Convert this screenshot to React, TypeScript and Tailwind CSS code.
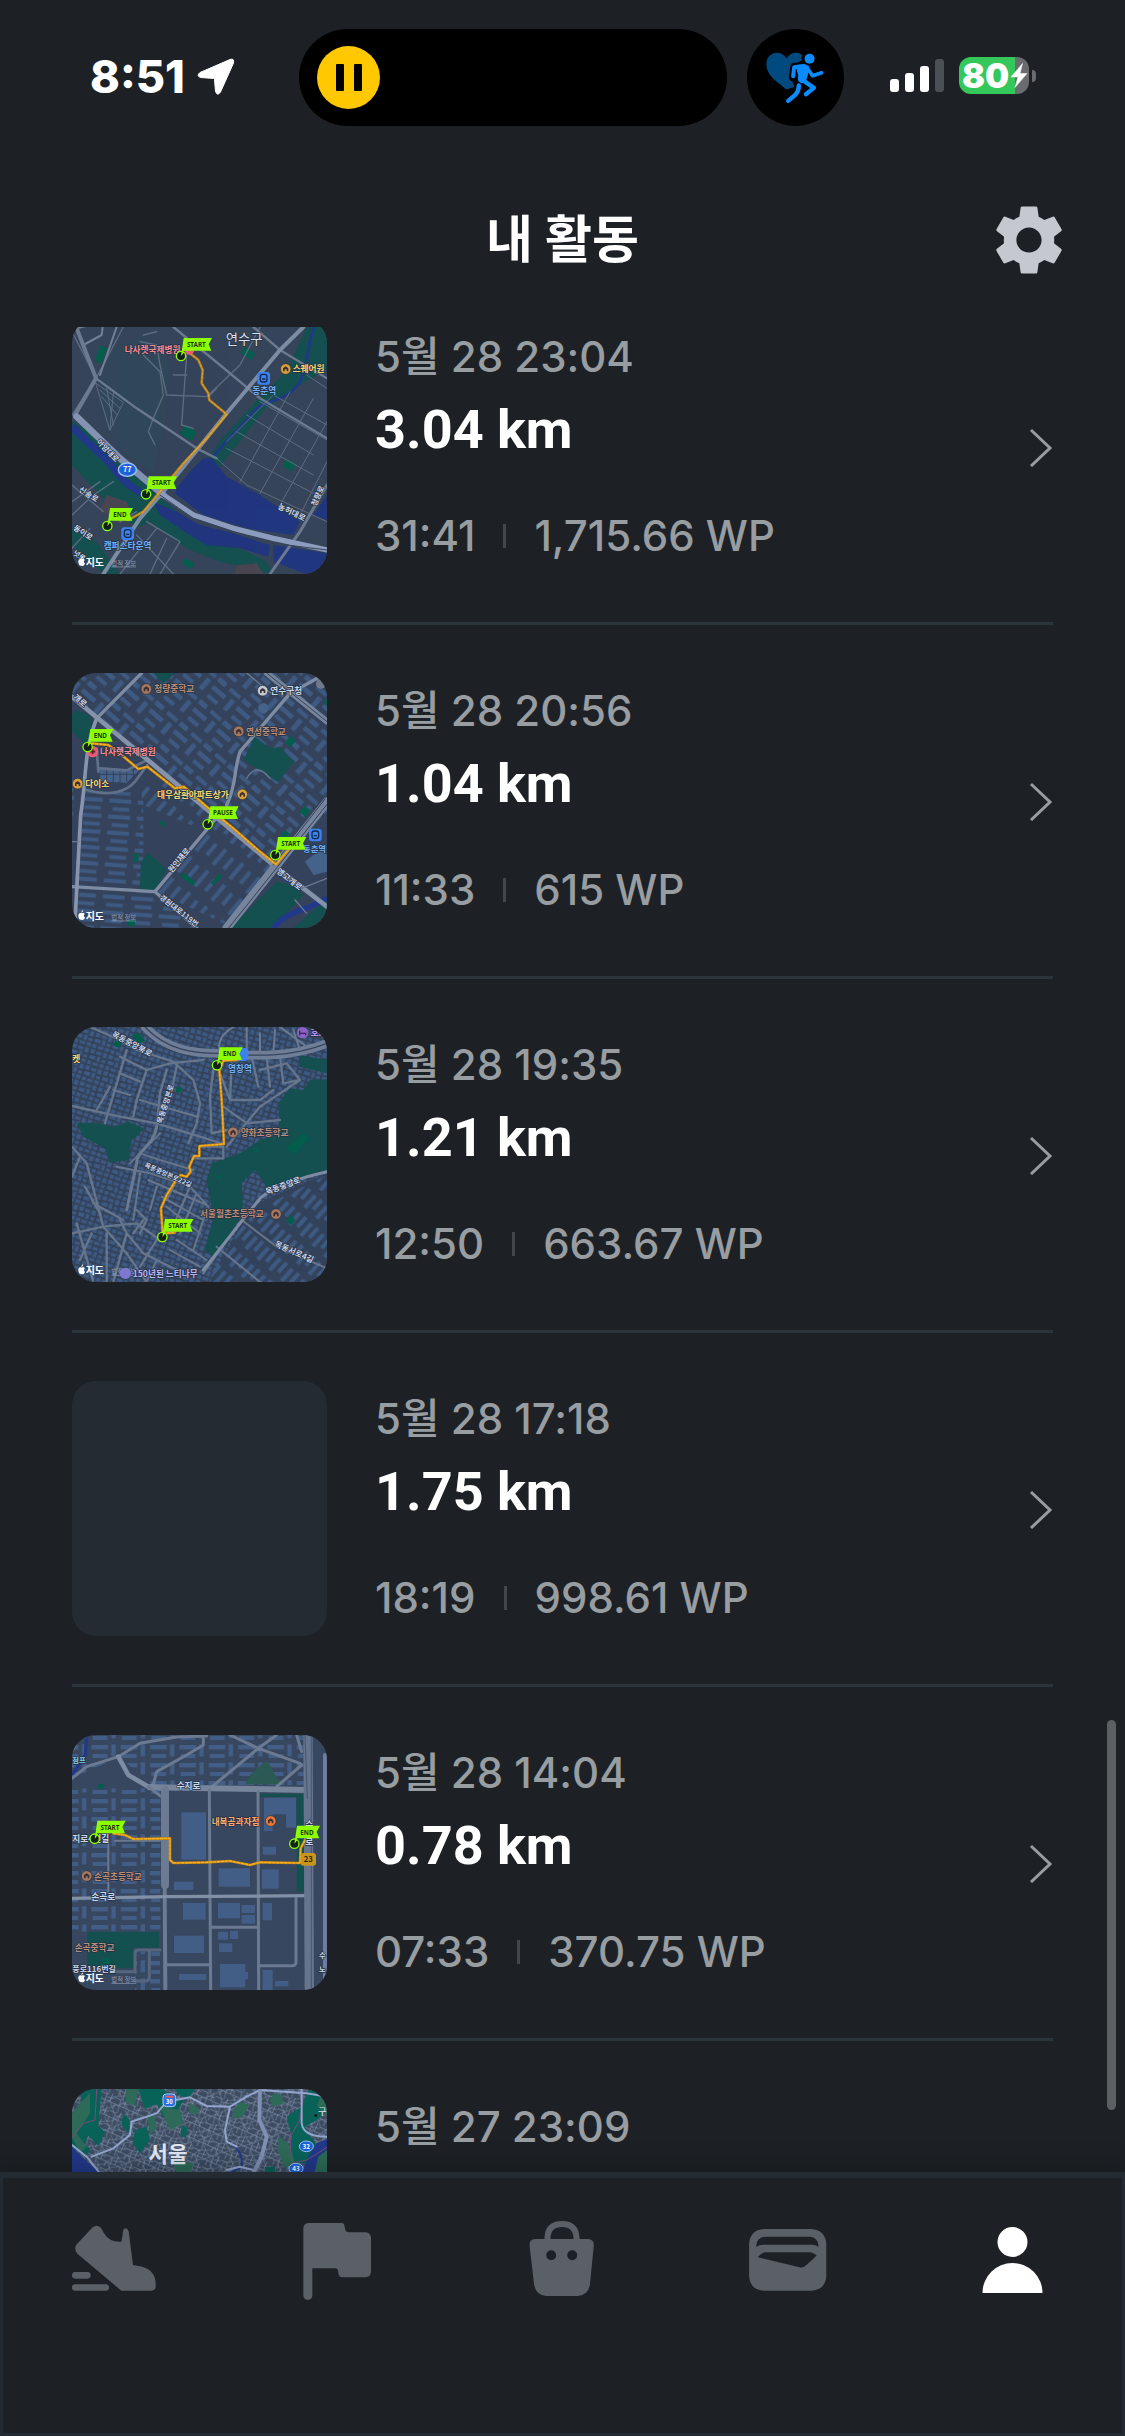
import type { ReactNode } from "react";
import { MdSettings } from "react-icons/md";

const MAP_FONT = '"Noto Sans CJK KR", "Noto Sans", sans-serif';

/* ---------- map building blocks ---------- */

function Label({ x, y, children, fill = "#cdd8ea", size = 26, rotate = 0, weight = 700 }: {
  x: number; y: number; children: ReactNode; fill?: string; size?: number; rotate?: number; weight?: number;
}) {
  return (
    <text
      x={x}
      y={y}
      fill={fill}
      fontSize={size}
      fontWeight={weight}
      fontFamily={MAP_FONT}
      stroke="#232f42"
      strokeWidth={4}
      strokeLinejoin="round"
      paintOrder="stroke"
      transform={rotate ? `rotate(${rotate} ${x} ${y})` : undefined}
    >
      {children}
    </text>
  );
}

function Marker({ x, y, text }: { x: number; y: number; text: string }) {
  const w = text === "END" ? 72 : 88;
  return (
    <g>
      <path d={`M${x} ${y} L${x + 8} ${y - 54} H${x + 5 + w} l-10 19 l8 19 H${x + 8} Z`} fill="#8cff00" />
      <circle cx={x} cy={y} r={14} fill="#14201c" stroke="#8cff00" strokeWidth={4} />
      <path d={`M${x} ${y} L${x + 2} ${y - 14} L${x + 10} ${y - 12} Z`} fill="#8cff00" />
      <text x={x + (text === "END" ? 38 : 46)} y={y - 27} textAnchor="middle" fontSize={19} fontWeight={700} fontFamily='"Noto Sans", sans-serif' fill="#1d3a10">
        {text}
      </text>
    </g>
  );
}

function Poi({ x, y, color }: { x: number; y: number; color: string }) {
  return (
    <g>
      <circle cx={x} cy={y} r={16} fill={color} stroke="#2a2f3c" strokeWidth={2} />
      <path d={`M${x - 8} ${y + 7} v-9 l8 -6 l8 6 v9 h-5 v-6 h-6 v6 z`} fill="#3b2f33" />
    </g>
  );
}

function Station({ x, y }: { x: number; y: number }) {
  return (
    <g>
      <rect x={x - 19} y={y - 19} width={38} height={38} rx={9} fill="#3b82f0" />
      <rect x={x - 10} y={y - 12} width={20} height={23} rx={7} fill="none" stroke="#12284f" strokeWidth={4} />
      <path d={`M${x - 5} ${y + 2} h10`} stroke="#12284f" strokeWidth={4} />
    </g>
  );
}

function MapsCredit({ y }: { y: number }) {
  return (
    <g>
      <path d={`M55 ${y - 10} c0 -8 6 -9 10 -7 c4 -2 9 -1 9 3 c-4 3 -3 7 1 9 c-2 7 -6 9 -10 7 c-5 2 -10 -4 -10 -12 z M64 ${y - 19} q0 -6 5 -8 q1 6 -5 8 z`} fill="#fff" />
      <text x={77} y={y + 3} fontSize={30} fontWeight={700} fill="#fff" fontFamily={MAP_FONT}>지도</text>
      <text x={154} y={y + 2} fontSize={19} fill="#8e9bb0" textDecoration="underline" fontFamily={MAP_FONT}>법적 정보</text>
    </g>
  );
}

function Road({ d, w = 8, c = "#6b7a90" }: { d: string; w?: number; c?: string }) {
  return <path d={d} fill="none" stroke={c} strokeWidth={w} strokeLinejoin="round" strokeLinecap="round" />;
}

function Track({ d }: { d: string }) {
  return (
    <g fill="none" strokeLinejoin="round" strokeLinecap="round">
      <path d={d} stroke="#c98410" strokeWidth={8} />
      <path d={d} stroke="#f5b524" strokeWidth={4} strokeDasharray="7 5" />
    </g>
  );
}

function MapFrame({ top, label, children }: { top: number; label: string; children: ReactNode }) {
  return (
    <svg className="size-full" viewBox={`36 ${top} 765 765`} role="img" aria-label={label}>
      {children}
    </svg>
  );
}

/* ---------- the individual route maps ---------- */

function MapYeonsu() {
  return (
    <MapFrame top={12} label="연수구 경로 지도">
      <rect x={36} y={12} width={765} height={765} fill="#36445a" />
      <path d="M130 110 L250 60 L330 140 L320 300 L280 480 L180 400 L110 290 Z" fill="#32475a" />
      <path d="M36 318 L90 350 L170 430 L290 540 L390 620 L500 680 L620 740 L640 777 L480 740 L380 700 L270 620 L230 640 L120 540 L36 450 Z" fill="#145050" />
      <path d="M740 36 h61 v130 l-60 30 l-70 50 l-60 40 l-60 80 l-90 110 l-40 -10 l60 -90 l110 -120 l90 -90 z" fill="#14504f" />
      <path d="M36 640 L110 680 L180 777 H130 L36 690 Z" fill="#145050" />
      <path d="M36 335 C80 380 100 395 150 445 C185 500 220 520 260 545" fill="none" stroke="#22388a" strokeWidth={22} />
      <path d="M762 36 C735 110 748 170 705 220 C660 265 620 250 580 290 C530 350 500 375 460 425" fill="none" stroke="#22388a" strokeWidth={8} />
      <path d="M430 430 L455 430 L500 485 L600 540 L720 620 L700 660 L560 640 L430 600 L345 535 L350 520 L390 470 Z" fill="#20367e" />
      <path d="M280 560 L350 590 L420 630 L520 655 L630 690 L625 725 L540 700 L440 690 L380 655 L300 600 Z" fill="#20367e" />
      <path d="M640 690 L801 715 V770 L740 777 L640 740 Z M801 540 L760 600 L801 615 Z" fill="#20367e" />
      <path d="M375 330 l35 20 l-15 28 l-35 -22 z M555 95 l32 22 l-14 18 l-32 -22 z M678 432 l30 15 l-12 22 l-28 -14 z M120 90 l22 10 l-20 45 l-18 -8 z M375 730 l28 15 l-8 18 l-30 -18 z" fill="#045e4e" />
      <path d="M140 540 l60 20 l20 45 l-40 20 l-60 -40 z M530 750 l60 -5 l20 32 h-85 z" fill="#4a4651" />
      <g opacity={0.75}>
        <Road w={3} d="M108 205 L190 262 L150 345 Z M120 225 L180 280 M125 245 L172 300 M140 220 L160 330 M160 235 L150 340" />
        <Road w={4} d="M190 36 L108 190 M108 190 L36 300 M36 50 L108 190 M240 80 L290 90 L300 150 L320 240 L440 245 M380 120 L365 330 L400 340 M250 120 L300 170 L310 240 L280 310 L265 350 L285 390 M240 100 h60 M250 60 L290 50 M440 245 L540 150 L600 36 M340 180 h40 M445 245 L470 220" />
        <Road w={3} d="M500 380 L640 240 L801 330 M470 430 L560 510 L801 620 M540 500 L690 230 M600 535 L760 250 M660 570 L801 320 M720 600 L801 440 M560 300 L760 420 M530 350 L760 480 M500 400 L770 540 M600 260 L801 375 M740 180 L801 220" />
        <Road w={4} d="M36 600 L100 540 L160 500 M36 510 L130 590 M180 620 L230 590 M36 560 L120 500 M260 620 L360 680 L300 777 M230 660 L340 777 M290 640 L180 777 M320 670 L270 777 M36 700 L90 640" />
      </g>
      <Road w={6} d="M50 40 L130 20 L125 60 L70 90 M170 36 L120 180" c="#718096" />
      <Road w={7} d="M108 190 L230 280 L410 400 L470 430 M340 36 L480 150 L600 250 L801 370 M660 105 L580 36 M660 105 L801 190" />
      <Road w={12} d="M730 36 L660 105 L500 295 L310 530 L240 610 L130 777" c="#7d8ba3" />
      <Road w={12} d="M50 40 L108 190 L45 300" />
      <Road w={9} d="M801 510 L720 650 L630 777" />
      <Road w={20} d="M50 305 L180 430 L310 540" c="#8493b2" />
      <Road w={16} d="M310 540 L400 600 L520 640 L640 670 L801 705" c="#8c9cbe" />
      <Road w={3} d="M300 540 L400 610 L520 650 L640 685 L801 705" c="#36445a" />
      <g opacity={0.8}>
        <Track d="M390 115 L415 135 L428 165 L425 205 L445 235 L448 255 L500 298 L440 370 L370 445 L300 530 L250 590 L205 615 L175 605" />
      </g>
      <Label x={497} y={88} size={40} weight={400} fill="#dbe3f0">연수구</Label>
      <Label x={194} y={115} fill="#f98a94">나사렛국제병원</Label>
      <circle cx={388} cy={104} r={15} fill="#ea5c6e" />
      <Poi x={677} y={162} color="#d9a038" />
      <Label x={698} y={172} fill="#fbd774">스퀘어원</Label>
      <Station x={611} y={190} />
      <Label x={577} y={237} fill="#6fb2fb">동춘역</Label>
      <Label x={108} y={382} rotate={46} size={23}>아암대로</Label>
      <Label x={55} y={528} rotate={32} size={23}>신송로</Label>
      <Label x={38} y={643} rotate={32} size={23}>동이로</Label>
      <Label x={38} y={718} rotate={32} size={21}>넛로</Label>
      <Label x={652} y={580} rotate={26} size={24}>농허대로</Label>
      <Label x={768} y={575} rotate={-66} size={23}>청량로</Label>
      <ellipse cx={202} cy={464} rx={27} ry={20} fill="#1d63d8" stroke="#9fc0f5" strokeWidth={4} />
      <text x={202} y={472} textAnchor="middle" fontSize={22} fontWeight={700} fill="#fff" fontFamily={MAP_FONT}>77</text>
      <Station x={203} y={656} />
      <Label x={131} y={702} fill="#6fb2fb">캠퍼스타운역</Label>
      <Marker x={363} y={123} text="START" />
      <Marker x={258} y={538} text="START" />
      <Marker x={142} y={633} text="END" />
      <MapsCredit y={750} />
    </MapFrame>
  );
}

function MapHospital() {
  return (
    <MapFrame top={24} label="나사렛국제병원 경로 지도">
      <defs>
        <pattern id="b2a" width={96} height={88} patternUnits="userSpaceOnUse" patternTransform="rotate(41)">
          <rect x={4} y={6} width={50} height={14} fill="#3e5a82" />
          <rect x={70} y={2} width={15} height={40} fill="#3e5a82" />
          <rect x={10} y={36} width={38} height={12} fill="#3e5a82" />
          <rect x={2} y={64} width={30} height={15} fill="#3e5a82" />
          <rect x={48} y={66} width={40} height={12} fill="#3e5a82" />
        </pattern>
        <pattern id="b2b" width={86} height={48} patternUnits="userSpaceOnUse" patternTransform="rotate(4)">
          <rect x={4} y={5} width={66} height={12} fill="#3e5a82" />
          <rect x={16} y={30} width={50} height={11} fill="#3e5a82" />
        </pattern>
        <pattern id="b2c" width={84} height={66} patternUnits="userSpaceOnUse" patternTransform="rotate(-50)">
          <rect x={4} y={5} width={60} height={12} fill="#3e5a82" />
          <rect x={14} y={38} width={44} height={12} fill="#3e5a82" />
        </pattern>
      </defs>
      <rect x={36} y={24} width={765} height={765} fill="#34435b" />
      <path d="M36 24 H801 V440 L650 590 L36 110 Z" fill="url(#b2a)" />
      <path d="M80 380 H250 V660 H36 V330 Z M60 680 H270 L400 789 H36 Z" fill="url(#b2b)" />
      <path d="M240 360 L320 350 L440 440 L640 600 L500 780 L290 680 L440 500 L250 420 Z" fill="url(#b2c)" />
      <path d="M50 135 L90 150 L100 190 L80 240 L36 200 V150 Z M585 215 L630 250 L660 245 L702 290 L655 352 L550 285 Z M265 563 L320 612 L285 680 H238 L243 590 Z M280 24 h65 l-35 32 z" fill="#145050" />
      <path d="M560 740 L650 650 L700 660 L730 690 L640 789 H500 Z M700 789 L801 700 V789 Z" fill="#145050" />
      <path d="M690 213 l17 14 l-15 20 l-17 -14 z M734 422 l16 14 l-14 20 l-17 -16 z M372 622 l35 30 l-8 12 l-38 -30 z M480 625 l6 10 l-26 26 l-8 -8 z M305 465 l14 12 l-8 10 l-13 -12 z M221 566 h14 v26 h-14 z M675 494 l16 14 l-20 12 l-8 -10 z M203 765 h22 v18 h-22 z M801 100 l-10 12 l10 12 z" fill="#045e4e" />
      <path d="M640 789 C690 730 740 740 801 700" fill="none" stroke="#22388a" strokeWidth={16} />
      <path d="M735 590 l50 -40 l16 20 v50 l-40 10 z" fill="#45628b" />
      <circle cx={610} cy={130} r={16} fill="#45628b" />
      <g stroke="#34435b" strokeWidth={3}>
        <path d="M118 305 L240 315 L200 355 L118 350 Z" fill="#45628b" />
        <path d="M140 300 v55 M160 300 v55 M180 305 v50 M200 310 v40 M220 312 v30 M118 328 h110" />
      </g>
      <Road w={8} d="M110 250 L115 320 M120 310 L200 316 L262 285 M80 375 C150 395 200 380 225 350 L262 300" c="#61708a" />
      <Road w={10} d="M110 160 L245 24 M800 24 L690 85 L540 260 C520 320 530 360 500 420 M485 440 L285 680 M36 665 L285 680 L410 789" c="#7d8ba3" />
      <Road w={11} d="M110 160 C70 260 80 340 62 450 L44 789" c="#8795ac" />
      <Road w={14} d="M36 95 L650 608 L801 725" c="#8592aa" />
      <Road w={26} d="M801 410 L650 600 L500 789" c="#76849c" />
      <Road w={3} d="M801 418 L657 600 L506 789 M795 402 L640 600" c="#34435b" />
      <Road w={18} d="M620 24 L801 170" c="#76849c" />
      <Road w={3} d="M620 24 L801 170" c="#34435b" />
      <Road w={4} d="M560 340 q30 -50 70 0 M36 530 h20 M725 670 L801 640 M705 705 L740 745 M560 24 L640 90" />
      <Track d="M95 235 L145 240 L185 270 L235 312 L262 305 L345 370 L372 365 L440 425 L520 490 L600 560 L648 598 L685 555" />
      <Poi x={259} y={72} color="#a5785f" />
      <Label x={283} y={82} fill="#b98e7c">청량중학교</Label>
      <Poi x={608} y={77} color="#c3cad6" />
      <Label x={631} y={87}>연수구청</Label>
      <circle cx={783} cy={56} r={15} fill="#6f7989" />
      <Poi x={536} y={199} color="#a5785f" />
      <Label x={558} y={210} fill="#b98e7c">연성중학교</Label>
      <Label x={38} y={98} rotate={42} size={24}>개로</Label>
      <circle cx={98} cy={260} r={17} fill="#ea5c74" />
      <path d="M98 252 v16 M90 260 h16" stroke="#5c1f2c" strokeWidth={5} />
      <Label x={120} y={270} fill="#fb8f99">나사렛국제병원</Label>
      <Poi x={53} y={356} color="#d9a038" />
      <Label x={76} y={367} fill="#fbd774">다이소</Label>
      <Label x={291} y={398} fill="#fbd774">대우삼환아파트상가</Label>
      <Poi x={547} y={388} color="#d9a038" />
      <Label x={335} y={625} rotate={-50} size={24}>원인재로</Label>
      <Label x={648} y={622} rotate={38} size={24}>앵고개로</Label>
      <Label x={297} y={700} rotate={38} size={22}>경원대로119번</Label>
      <Station x={766} y={510} />
      <Label x={729} y={562} size={25} fill="#6fb2fb">동춘역</Label>
      <Marker x={83} y={246} text="END" />
      <Marker x={443} y={478} text="PAUSE" />
      <Marker x={646} y={570} text="START" />
      <MapsCredit y={762} />
    </MapFrame>
  );
}

function MapYeomchang() {
  return (
    <MapFrame top={21} label="염창역 경로 지도">
      <defs>
        <pattern id="b3a" width={57} height={51} patternUnits="userSpaceOnUse" patternTransform="rotate(18)">
          <rect x={2} y={2} width={13} height={12} fill="#3e5a83" />
          <rect x={20} y={4} width={16} height={9} fill="#3e5a83" />
          <rect x={41} y={2} width={12} height={15} fill="#3e5a83" />
          <rect x={4} y={20} width={18} height={11} fill="#3e5a83" />
          <rect x={27} y={18} width={10} height={15} fill="#3e5a83" />
          <rect x={42} y={23} width={12} height={9} fill="#3e5a83" />
          <rect x={2} y={37} width={12} height={11} fill="#3e5a83" />
          <rect x={19} y={38} width={17} height={9} fill="#3e5a83" />
          <rect x={41} y={37} width={13} height={10} fill="#3e5a83" />
        </pattern>
        <pattern id="b3b" width={70} height={48} patternUnits="userSpaceOnUse" patternTransform="rotate(-48)">
          <rect x={3} y={4} width={48} height={12} fill="#3e5a83" />
          <rect x={16} y={27} width={38} height={12} fill="#3e5a83" />
        </pattern>
      </defs>
      <rect x={36} y={21} width={765} height={765} fill="#34435b" />
      <rect x={36} y={21} width={765} height={765} fill="url(#b3a)" />
      <path d="M570 560 L801 460 V786 H450 Z" fill="#34435b" />
      <path d="M570 580 L801 465 V786 H440 Z" fill="url(#b3b)" />
      <path d="M50 310 L110 308 L160 320 L205 305 L250 325 L240 340 L215 360 L205 420 L150 428 L135 385 L70 350 Z" fill="#145050" />
      <path d="M455 430 L540 400 L600 360 L660 340 L655 250 L690 205 L730 210 L750 180 L801 178 V450 L700 480 L620 500 L585 450 L545 490 L550 580 L510 640 L460 712 L435 690 L460 590 L440 480 Z M718 105 L801 120 V160 L718 140 Z" fill="#145050" />
      <path d="M730 340 l17 14 l-45 50 l-24 -20 z M692 585 l14 15 l-14 16 l-14 -14 z M215 45 l20 -5 l22 24 l-25 6 z M165 62 l20 5 l-6 16 l-18 -6 z M350 200 l14 2 l-2 16 l-14 -2 z M580 385 h16 v12 h-16 z M470 465 h14 v12 h-14 z" fill="#045e4e" />
      <g opacity={0.9}>
        <Road w={7} d="M36 258 L180 290 L290 310 L420 350 L490 372 M90 21 L180 60 L230 90 L340 125 L400 180 L420 250 L410 310 L385 370 M200 90 L135 310 M150 200 L110 270 M180 110 L260 150 L330 130 M260 150 L230 240 L220 290 M330 130 L380 125 L430 120 M320 150 L300 220 L290 320 M350 140 L335 210 M180 160 L240 185 M160 210 L210 225 M240 240 L410 290" />
        <Road w={7} d="M460 150 L450 230 L455 340 M515 130 L510 240 M575 110 L595 200 M480 160 L510 240 H600 L640 210 M600 150 L680 130 L720 180 M620 110 L630 200 M490 260 L560 310 L660 300 M660 110 L670 190 L720 180 L600 260 L500 380 M455 340 L500 330 M420 380 H490 V415 H400" />
        <Road w={7} d="M36 380 L80 430 L130 620 L200 700 L260 786 M60 410 L36 470 M130 620 L36 640 M130 620 L230 610 L300 660 M75 500 L120 580 M50 610 L100 786 M95 640 L60 720 M100 550 L190 600 M180 600 L200 640 L250 700 L350 750 M200 640 L160 786 M140 640 V786 M250 600 L220 640 M290 660 L240 740 M230 570 L260 600 L240 640" />
        <Road w={6} d="M170 440 L270 460 L390 500 L445 560 M240 460 L220 600 M265 480 L440 555 M290 500 L270 570 M305 530 L430 600 M350 480 L320 540 M390 500 L330 640 M410 520 L360 640 M440 570 L400 690 M320 560 L420 640 M350 660 L440 720 M330 690 L420 740 M290 720 L260 786 M210 430 L300 340 M240 400 L300 420 L400 450" />
        <Road w={6} d="M545 600 L650 680 L801 745 M600 540 L545 600 L430 760 M470 680 L600 786" />
      </g>
      <Road w={9} d="M290 320 C280 380 230 390 230 430 L200 570" />
      <Road w={9} d="M801 455 C730 470 640 500 600 535 L540 610 L430 750" c="#7d8ba3" />
      <Road w={26} d="M255 21 C320 90 400 100 480 100 C600 110 700 110 801 70" c="#6f7e96" />
      <Road w={4} d="M255 21 C320 90 400 100 480 100 C600 110 700 110 801 70" c="#34435b" />
      <Road w={6} d="M480 100 C470 60 490 40 520 21 M560 100 V21 M640 100 L645 30 M600 100 V40 M720 90 L700 30 M660 21 L740 80" />
      <Track d="M555 118 L490 122 L478 150 L485 240 L492 372 L418 378 V408 H402 L388 440 L392 455 L380 470 L362 465 L345 485 L320 525 L303 565 L308 640 L345 638" />
      <Label x={154} y={48} rotate={28} size={24}>목동중앙북로</Label>
      <Label x={305} y={312} rotate={-72} size={22}>목동중앙본로</Label>
      <Label x={252} y={440} rotate={24} size={20}>목동중앙본로22길</Label>
      <Label x={37} y={126} fill="#fbd774">켓</Label>
      <circle cx={728} cy={38} r={17} fill="#8b62c4" />
      <path d="M719 40 h18 v6 M719 32 v14" stroke="#3a2360" strokeWidth={4} fill="none" />
      <Label x={752} y={48} fill="#c194f2">호.</Label>
      <path d="M535 84 h18 q12 0 12 12 v15 q0 12 -12 12 h-18 z" fill="#3b82f0" />
      <Label x={504} y={155} fill="#6fb2fb">염창역</Label>
      <Poi x={519} y={337} color="#a5785f" />
      <Label x={542} y={347} fill="#b98e7c">양화초등학교</Label>
      <Label x={420} y={592} fill="#b98e7c">서울월촌초등학교</Label>
      <Poi x={648} y={582} color="#a5785f" />
      <Label x={620} y={524} rotate={-20} size={24}>목동중앙로</Label>
      <Label x={642} y={678} rotate={24} size={24}>목동서로4길</Label>
      <MapsCredit y={760} />
      <circle cx={196} cy={760} r={17} fill="#7f78cf" />
      <Label x={218} y={771} fill="#b8b4fa">150년된 느티나무</Label>
      <Marker x={471} y={136} text="END" />
      <Marker x={307} y={651} text="START" />
    </MapFrame>
  );
}

function MapSongok() {
  return (
    <MapFrame top={30} label="손곡로 경로 지도">
      <defs>
        <pattern id="b5" width={88} height={54} patternUnits="userSpaceOnUse">
          <rect x={6} y={6} width={50} height={13} fill="#435e86" />
          <rect x={66} y={4} width={13} height={36} fill="#435e86" />
          <rect x={10} y={33} width={44} height={12} fill="#435e86" />
        </pattern>
      </defs>
      <rect x={36} y={30} width={765} height={765} fill="#37475f" />
      <rect x={36} y={190} width={265} height={430} fill="url(#b5)" />
      <path d="M36 30 H740 V180 H270 L180 95 L36 160 Z" fill="url(#b5)" />
      <path d="M225 680 H300 V795 H225 Z" fill="url(#b5)" />
      <path d="M82 620 H297 V668 H220 V730 H82 Z M600 206 H732 V500 H710 V216 H600 Z" fill="#145050" />
      <path d="M620 105 L662 178 H555 L570 150 Z" fill="#2b5a52" />
      <path d="M115 177 h16 v15 h-16 z M127 700 h22 v18 h-22 z" fill="#045e4e" />
      <g fill="#435e86">
        <rect x={364} y={262} width={74} height={142} />
        <path d="M612 218 h96 v90 h-30 v-40 h-40 v50 h-26 z" />
        <rect x={342} y={470} width={58} height={25} />
        <rect x={476} y={430} width={94} height={55} />
        <rect x={606} y={433} width={50} height={58} />
        <rect x={369} y={534} width={68} height={50} />
        <rect x={474} y={534} width={66} height={46} />
        <rect x={545} y={540} width={40} height={24} />
        <rect x={545} y={570} width={40} height={26} />
        <rect x={608} y={534} width={28} height={52} />
        <rect x={342} y={632} width={90} height={52} />
        <rect x={474} y={620} width={30} height={24} />
        <rect x={510} y={618} width={24} height={24} />
        <rect x={477} y={655} width={40} height={26} />
        <path d="M480 717 h76 v24 h8 v22 h-8 v24 h-76 z" />
        <rect x={357} y={747} width={82} height={18} />
        <rect x={608} y={735} width={30} height={60} />
        <rect x={645} y={768} width={40} height={16} />
        <rect x={608} y={365} width={40} height={24} />
      </g>
      <path d="M80 30 L76 90 L36 150" fill="none" stroke="#22388a" strokeWidth={10} />
      <Road w={9} d="M60 30 L36 80 M36 160 L80 125 L175 95 L240 55 L350 36 L440 33 M430 30 V60 L380 90 L290 140 L278 185 M450 190 L595 70 L650 30 M510 30 L595 70 L720 115 M725 120 L650 185 M710 30 L725 80" />
      <Road w={14} d="M175 95 L205 150 L265 185 L310 190" c="#7d8ba3" />
      <Road w={18} d="M270 187 L745 195" c="#76849c" />
      <Road w={24} d="M315 195 V480" c="#6d7b92" />
      <Road w={12} d="M314 480 L316 795" c="#6d7b92" />
      <Road w={9} d="M448 195 L452 795 M594 200 L596 795 M265 185 L310 220" />
      <Road w={9} d="M452 607 H594 M320 719 H448 M600 722 H700 Q708 720 708 710 V520" />
      <Road w={10} d="M36 520 L320 515 L750 512" c="#8190a6" />
      <Road w={6} d="M145 345 V500 M165 347 H300 M36 347 H80" />
      <Road w={9} d="M300 675 H235 Q225 675 225 685 V740 M268 680 V760 Q265 768 258 768 H225 M160 740 H225" c="#56667e" />
      <Road w={28} d="M744 30 L748 795" c="#66758d" />
      <Road w={3} d="M735 30 L742 220 M754 30 L754 795" c="#46566e" />
      <Road w={12} d="M795 90 V795" c="#6d7ca0" />
      <Track d="M160 325 L195 330 L220 342 L330 340 V405 L340 414 L440 412 L510 408 L570 420 L600 412 L720 414 L722 370 L735 345" />
      <Label x={37} y={115} size={22} fill="#7fd0e6">점프</Label>
      <Label x={350} y={192}>수지로</Label>
      <Label x={37} y={352}>지로4번길</Label>
      <Label x={455} y={299} fill="#ffab6b">내복곰과자점</Label>
      <Poi x={632} y={288} color="#ee7a38" />
      <Poi x={80} y={453} color="#a5785f" />
      <Label x={102} y={464} fill="#b98e7c">손곡초등학교</Label>
      <Label x={94} y={525}>손곡로</Label>
      <Label x={44} y={677} fill="#b98e7c">손곡중학교</Label>
      <Label x={37} y={742} size={24}>풍로116번길</Label>
      <Label x={736} y={310}>수</Label>
      <Label x={736} y={360}>로</Label>
      <Label x={777} y={698} size={22}>수</Label>
      <Label x={777} y={740} size={22}>노</Label>
      <rect x={722} y={384} width={46} height={38} rx={8} fill="#c8951c" />
      <text x={745} y={411} textAnchor="middle" fontSize={23} fontWeight={700} fill="#2c2610" fontFamily={MAP_FONT}>23</text>
      <Marker x={104} y={341} text="START" />
      <Marker x={703} y={356} text="END" />
      <MapsCredit y={769} />
    </MapFrame>
  );
}

function MapSeoul() {
  return (
    <MapFrame top={57} label="서울 경로 지도">
      <defs>
        <pattern id="b6" width={46} height={42} patternUnits="userSpaceOnUse" patternTransform="rotate(24)">
          <path d="M0 8 H20 L28 0 M20 8 L24 42 M0 26 H46 M36 0 V26 M8 26 V42 M24 16 L46 12" stroke="#7c8ca6" strokeWidth={2} fill="none" />
        </pattern>
        <pattern id="b6b" width={64} height={58} patternUnits="userSpaceOnUse" patternTransform="rotate(-18)">
          <path d="M0 10 L40 20 L64 10 M20 0 L28 58 M50 16 V58 M0 40 L64 36" stroke="#8393ad" strokeWidth={2} fill="none" />
        </pattern>
      </defs>
      <rect x={36} y={57} width={765} height={765} fill="#3c4b60" />
      <rect x={36} y={57} width={765} height={765} fill="url(#b6)" />
      <rect x={36} y={57} width={765} height={765} fill="url(#b6b)" opacity={0.7} />
      <g fill="#086258">
        <path d="M60 57 h65 l-10 110 l20 20 l-20 40 l-30 -30 l-20 40 l-20 -60 l25 -50 z" />
        <path d="M235 57 h75 l30 25 l30 10 l-20 35 l-40 15 l-20 -40 l-35 15 z M345 57 h60 l-20 28 l-30 -10 z M190 130 l20 20 l-5 40 l-20 -25 z M225 180 l35 -10 l10 40 l-30 40 l-22 -30 z M365 165 l18 10 l-5 30 l-16 -10 z" />
        <path d="M725 110 l20 -50 h40 v80 l-50 30 l30 50 l-10 60 h-70 l10 -80 l-15 -60 z M615 290 h30 v20 h-30 z M36 205 l55 30 l-10 20 l-45 -20 z" />
      </g>
      <g fill="#2d6a57">
        <path d="M60 100 l30 -30 v60 l-40 60 l30 40 l-20 20 l-24 -50 v-70 z M300 110 l60 10 l10 40 l-40 20 z M200 57 h35 l-10 50 l-28 -10 z M390 100 l28 15 l-10 20 l-22 -10 z M520 120 l20 -25 l28 10 l-20 35 l-30 5 z M640 70 l25 5 l5 25 l-30 10 l-10 -20 z M655 200 l30 20 l20 55 l-30 20 l-20 -50 z M262 140 l20 -5 l8 40 l-20 20 z M340 270 l60 10 l-10 40 h-40 z M790 57 h11 v80 l-30 -30 z M760 250 l41 -15 v70 h-50 z" />
      </g>
      <path d="M36 232 L130 320 H36 Z" fill="#22388a" />
      <path d="M801 208 L770 220 L745 260 L720 320 H760 L775 260 L801 240 Z" fill="#22388a" />
      <path d="M520 225 Q550 250 545 290 L510 310" fill="none" stroke="#22388a" strokeWidth={6} />
      <Road w={3} d="M110 57 L105 150 L70 160 L36 200 M732 57 L720 150 L690 200 L695 280 L740 270 L801 232" c="#7c4a7c" />
      <Road w={6} d="M95 260 L160 235 L210 195 L215 155 L290 130 L320 95 L390 82 L440 108 L510 110 L560 80 L600 60 L740 70 L801 80 M510 110 L495 180 L500 215 L530 230 M725 57 V160 Q730 200 801 200 M500 300 L540 290 L580 300" c="#93a5cf" />
      <Road w={12} d="M600 57 L598 150 L620 200 L605 260 L580 310" c="#7f90b4" />
      <Road w={6} d="M36 225 L80 260 L120 310" c="#93a5cf" />
      <text x={265} y={275} fontSize={64} fontWeight={700} fill="#e1e8f4" fontFamily={MAP_FONT}>서울</text>
      <text x={774} y={134} fontSize={28} fill="#dbe3f0" fontFamily={MAP_FONT}>구</text>
      <circle cx={767} cy={137} r={4} fill="#111" />
      <rect x={309} y={72} width={38} height={38} rx={10} fill="#2d6ee0" stroke="#b8d0fa" strokeWidth={3} />
      <path d="M316 80 h24" stroke="#e06055" strokeWidth={6} />
      <text x={328} y={102} textAnchor="middle" fontSize={18} fontWeight={700} fill="#fff" fontFamily={MAP_FONT}>30</text>
      <ellipse cx={739} cy={229} rx={21} ry={16} fill="#1d63d8" stroke="#9fc0f5" strokeWidth={3} />
      <text x={739} y={236} textAnchor="middle" fontSize={19} fontWeight={700} fill="#fff" fontFamily={MAP_FONT}>32</text>
      <ellipse cx={708} cy={296} rx={21} ry={16} fill="#1d63d8" stroke="#9fc0f5" strokeWidth={3} />
      <text x={708} y={303} textAnchor="middle" fontSize={19} fontWeight={700} fill="#fff" fontFamily={MAP_FONT}>43</text>
    </MapFrame>
  );
}

/* ---------- status bar ---------- */

function StatusBar() {
  return (
    <div className="flex h-[155px] shrink-0 items-center">
      <div className="flex w-[299px] items-center gap-3 pb-[2px] pl-[90px] text-white">
        <span className="text-[45px] leading-none font-extrabold">8:51</span>
        <svg className="h-[38px] w-[38px]" viewBox="0 0 38 38" aria-hidden="true">
          <path d="M33 1.5 Q37.500 0 36.500 5 L23.500 34 Q20.500 38.500 18.500 33.500 L17.500 21.500 Q17.400 20.500 16.400 20.400 L3.500 19.500 Q-1 17.800 3 14.500 Z" fill="#fff" stroke="#fff" strokeWidth={1} />
        </svg>
      </div>
      <div className="flex items-center gap-5">
        <div className="flex h-[97px] w-[428px] items-center rounded-full bg-black pl-[18px]">
          <div className="flex size-[63px] items-center justify-center gap-[10px] rounded-full bg-[#ffc800]">
            <span className="h-[27px] w-2 rounded-[1px] bg-black" />
            <span className="h-[27px] w-2 rounded-[1px] bg-black" />
          </div>
        </div>
        <svg className="size-[97px]" viewBox="81 27 290 290" aria-hidden="true">
          <circle cx={226} cy={172} r={145} fill="#000" />
          <path d="M199 208 C175 188 139 168 139 132 C139 96 182 86 200 115 C212 92 245 94 248 112 L240 150 L225 200 Z" fill="#004a80" />
          <g fill="none" stroke="#000" strokeLinecap="round" strokeLinejoin="round">
            <path d="M220 170 L224 142 L262 142 M238 190 L232 215 L204 242" strokeWidth={28} />
            <path d="M250 145 L240 180" strokeWidth={48} />
          </g>
          <circle cx={268} cy={116} r={24} fill="#000" />
          <circle cx={268} cy={116} r={15} fill="#0a8cff" />
          <path d="M226 135 Q245 131 266 137 L262 170 L242 186 L234 166 Z" fill="#0a8cff" />
          <g fill="none" stroke="#0a8cff" strokeLinecap="round" strokeLinejoin="round">
            <path d="M219 168 L222 141 L250 138" strokeWidth={12} />
            <path d="M262 145 L277 167 L304 158" strokeWidth={11} />
            <path d="M252 145 L246 176" strokeWidth={26} />
            <path d="M248 180 L281 203 L257 222" strokeWidth={13} />
            <path d="M236 196 Q236 213 226 223 L204 242" strokeWidth={13} />
          </g>
        </svg>
      </div>
      <div className="flex flex-1 items-center justify-end gap-[15px] pr-[89px] pb-1">
        <div className="flex h-[33px] items-end gap-[6px]">
          <span className="h-[13px] w-[9px] rounded-[3px] bg-white" />
          <span className="h-[19px] w-[9px] rounded-[3px] bg-white" />
          <span className="h-[26px] w-[9px] rounded-[3px] bg-white" />
          <span className="h-[33px] w-[9px] rounded-[3px] bg-[#4b5054]" />
        </div>
        <div className="flex items-center gap-[3px]">
          <div className="relative flex h-[37px] w-[70px] items-center rounded-[12px] bg-linear-to-r from-[#34c759] from-80% to-[#6a6c6f] to-80% pl-[3px]">
            <span className="text-[34px] leading-none font-black text-white">80</span>
            <svg className="absolute top-[6px] right-[1px] h-[25px] w-[18px]" viewBox="0 0 18 25" aria-hidden="true">
              <path d="M12.500 .5 L1 14 H8 L5 24.500 L17 10.500 H10 Z" fill="#fff" stroke="#fff" strokeWidth={0.500} />
            </svg>
          </div>
          <span className="h-3 w-1 rounded-r-full bg-[#6a6c6f]" />
        </div>
      </div>
    </div>
  );
}

/* ---------- activity list ---------- */

type Activity = {
  date: string;
  distance?: string;
  duration?: string;
  points?: string;
  map?: ReactNode;
};

const activities: Activity[] = [
  { date: "5월 28 23:04", distance: "3.04 km", duration: "31:41", points: "1,715.66 WP", map: <MapYeonsu /> },
  { date: "5월 28 20:56", distance: "1.04 km", duration: "11:33", points: "615 WP", map: <MapHospital /> },
  { date: "5월 28 19:35", distance: "1.21 km", duration: "12:50", points: "663.67 WP", map: <MapYeomchang /> },
  { date: "5월 28 17:18", distance: "1.75 km", duration: "18:19", points: "998.61 WP" },
  { date: "5월 28 14:04", distance: "0.78 km", duration: "07:33", points: "370.75 WP", map: <MapSongok /> },
  { date: "5월 27 23:09", map: <MapSeoul /> },
];

function ActivityRow({ date, distance, duration, points, map }: Activity) {
  return (
    <li className="border-b-[3px] border-[#2b333b]">
      <a href="#activity" className="flex items-center gap-12 py-12">
        <div className="size-[255px] shrink-0 overflow-hidden rounded-[24px] bg-[#252b33]">{map}</div>
        <div className="flex flex-1 flex-col justify-between self-stretch py-2">
          <div>
            <p className="text-[42px] leading-[60px] font-medium text-[#989da1]">{date}</p>
            {distance && <p className="font-[Roboto] text-[54px] leading-[86px] font-bold text-white">{distance}</p>}
          </div>
          {duration && (
            <p className="flex items-center gap-7 text-[42px] leading-[60px] font-medium text-[#989da1]">
              <span>{duration}</span>
              <span className="h-6 w-[3px] bg-[#42474b]" />
              <span>{points}</span>
            </p>
          )}
        </div>
        <svg className="h-[40px] w-6" viewBox="0 0 24 40" fill="none" aria-hidden="true">
          <path d="M2 3 L21 21 L2 39" stroke="#989da1" strokeWidth={3} />
        </svg>
      </a>
    </li>
  );
}

/* ---------- tab bar ---------- */

const tabs: { name: string; active?: boolean; icon: ReactNode }[] = [
  {
    name: "운동",
    icon: (
      <svg className="size-[90px]" viewBox="24 45 270 270" fill="currentColor" aria-hidden="true">
        <path d="M98 82 Q110 73 121 82 Q126 88 131 98 Q148 127 184 125 Q188 110 189 93 Q190 85 197 85 Q204 86 206 94 L219 195 L247 200 Q287 212 287 252 V261 Q286 271 275 272 H184 L52 161 Q41 148 49 134 Z" />
        <rect x={36} y={216} width={56} height={20} rx={10} />
        <rect x={36} y={253} width={111} height={19} rx={9.500} />
      </svg>
    ),
  },
  {
    name: "챌린지",
    icon: (
      <svg className="size-[90px]" viewBox="699 45 270 270" fill="currentColor" aria-hidden="true">
        <path d="M730 84 Q731 70 745 69 H845 Q852 69 853 76 L856 90 Q858 96 865 97 H917 Q931 98 933 112 V216 Q932 230 917 232 H846 Q838 231 836 224 L834 212 Q833 205 826 205 H757 V286 Q757 299 743 300 Q730 299 730 286 Z" />
      </svg>
    ),
  },
  {
    name: "상점",
    icon: (
      <svg className="size-[90px]" viewBox="0 0 90 90" fill="currentColor" aria-hidden="true">
        <path d="M29.500 26 V23 Q30 9 44 9 Q58 9 58.500 23 V26" fill="none" stroke="currentColor" strokeWidth={6} />
        <path fillRule="evenodd" d="M17 24 H70 Q76 24.500 75.800 30 L72 69 Q70.500 80 60 81 H28 Q17.500 80 16 69 L11.500 30 Q11.500 24.500 17 24 Z M28.200 40.300 a5 5 0 1 0 10 0 a5 5 0 1 0 -10 0 M49.200 40.300 a5 5 0 1 0 10 0 a5 5 0 1 0 -10 0" />
      </svg>
    ),
  },
  {
    name: "지갑",
    icon: (
      <svg className="size-[90px]" viewBox="0 0 90 90" fill="currentColor" aria-hidden="true">
        <path fillRule="evenodd" d="M21 14 H68 Q82.500 15 83.300 29 V61 Q82.500 75 68 75.700 H21 Q7 75 6.100 61 V29 Q7 15 21 14 Z M13.400 32 Q16 29.700 20 29.700 H69 Q73 29.700 75.400 32 V30 Q74.500 22.500 67 21.700 H22 Q14.300 22.500 13.400 30 Z M14.800 42.300 Q18 37.500 23 37.300 H66 Q71 37.500 73.600 40.500 Q71 43.500 61.500 51.500 Q60 52.900 57.500 52.500 Z" />
      </svg>
    ),
  },
  {
    name: "내 활동",
    active: true,
    icon: (
      <svg className="size-[90px]" viewBox="0 0 90 90" fill="currentColor" aria-hidden="true">
        <circle cx={44.500} cy={27} r={15} />
        <path d="M14.500 78 A30 30 0 0 1 74.500 78 Z" />
      </svg>
    ),
  },
];

function TabBar() {
  return (
    <nav className="relative h-[264px] shrink-0 border-t-[3px] border-[#252b33] bg-[#1d2125] shadow-[inset_0_0_0_3px_#252b33,0_-4px_24px_rgba(0,0,0,0.25)]">
      <ul className="grid grid-cols-5 pt-10">
        {tabs.map((tab) => (
          <li key={tab.name} className="flex justify-center">
            <a
              href="#tab"
              aria-label={tab.name}
              aria-current={tab.active ? "page" : undefined}
              className={tab.active ? "text-white" : "text-[#5a6066]"}
            >
              {tab.icon}
            </a>
          </li>
        ))}
      </ul>
    </nav>
  );
}

export default function App() {
  return (
    <div className="flex h-screen flex-col overflow-hidden bg-[#1d2125] font-[Inter,'Noto_Sans_CJK_KR',sans-serif]">
      <StatusBar />
      <header className="grid h-[172px] shrink-0 grid-cols-[1fr_auto_1fr] items-center px-[54px] pb-[2px]">
        <h1 className="col-start-2 text-[51px] leading-[72px] font-bold text-white">내 활동</h1>
        <button type="button" aria-label="설정" className="justify-self-end text-[#c5c8cf]">
          <MdSettings className="size-[84px]" />
        </button>
      </header>
      <main className="relative min-h-0 flex-1 overflow-hidden">
        <ul className="-mt-14 px-[72px]">
          {activities.map((activity) => (
            <ActivityRow key={activity.date} {...activity} />
          ))}
        </ul>
        <div className="absolute right-[9px] bottom-[62px] h-[390px] w-[9px] rounded-full bg-[#5c6063]" />
      </main>
      <TabBar />
    </div>
  );
}
